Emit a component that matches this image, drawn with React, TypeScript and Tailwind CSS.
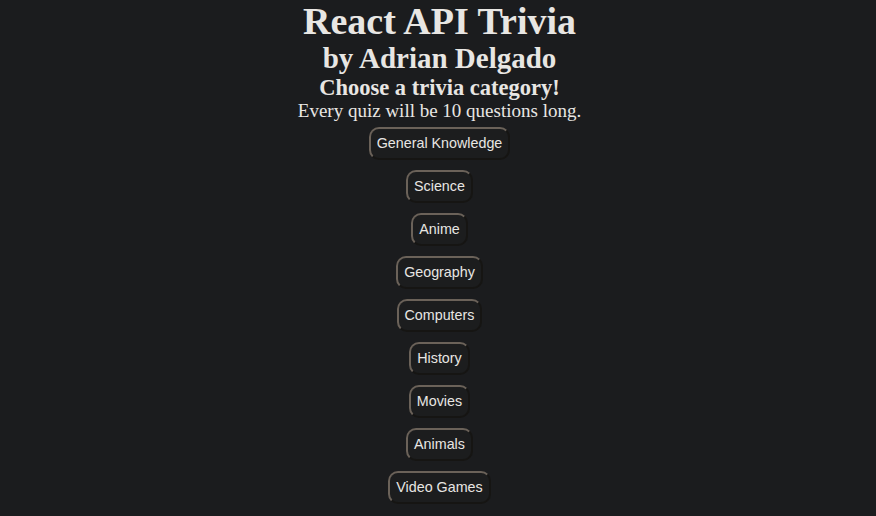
const categories = [
  'General Knowledge',
  'Science',
  'Anime',
  'Geography',
  'Computers',
  'History',
  'Movies',
  'Animals',
  'Video Games',
];

export default function App() {
  return (
    <div className="min-h-screen bg-[#1b1c1e] text-[#e8e6e3] flex flex-col items-center pl-[3px] font-['Liberation_Serif',serif]">
      <h1 className="text-[38px] font-bold leading-[40px] mt-[1px]">React API Trivia</h1>
      <h2 className="text-[29px] font-bold leading-[34px]">by Adrian Delgado</h2>
      <h3 className="text-[22.5px] font-bold leading-[26px]">Choose a trivia category!</h3>
      <p className="text-[19px] leading-[20px]">Every quiz will be 10 questions long.</p>
      <div className="flex flex-col items-center gap-[10px] mt-[6px]">
        {categories.map((c) => (
          <button
            key={c}
            className="font-['Liberation_Sans',sans-serif] text-[14.3px] leading-[15px] px-[6px] py-[7px] rounded-[10px] border-2 [border-style:outset] border-[#6b6259] bg-[#1c1d1e] text-[#e8e6e3]"
          >
            {c}
          </button>
        ))}
      </div>
    </div>
  );
}
